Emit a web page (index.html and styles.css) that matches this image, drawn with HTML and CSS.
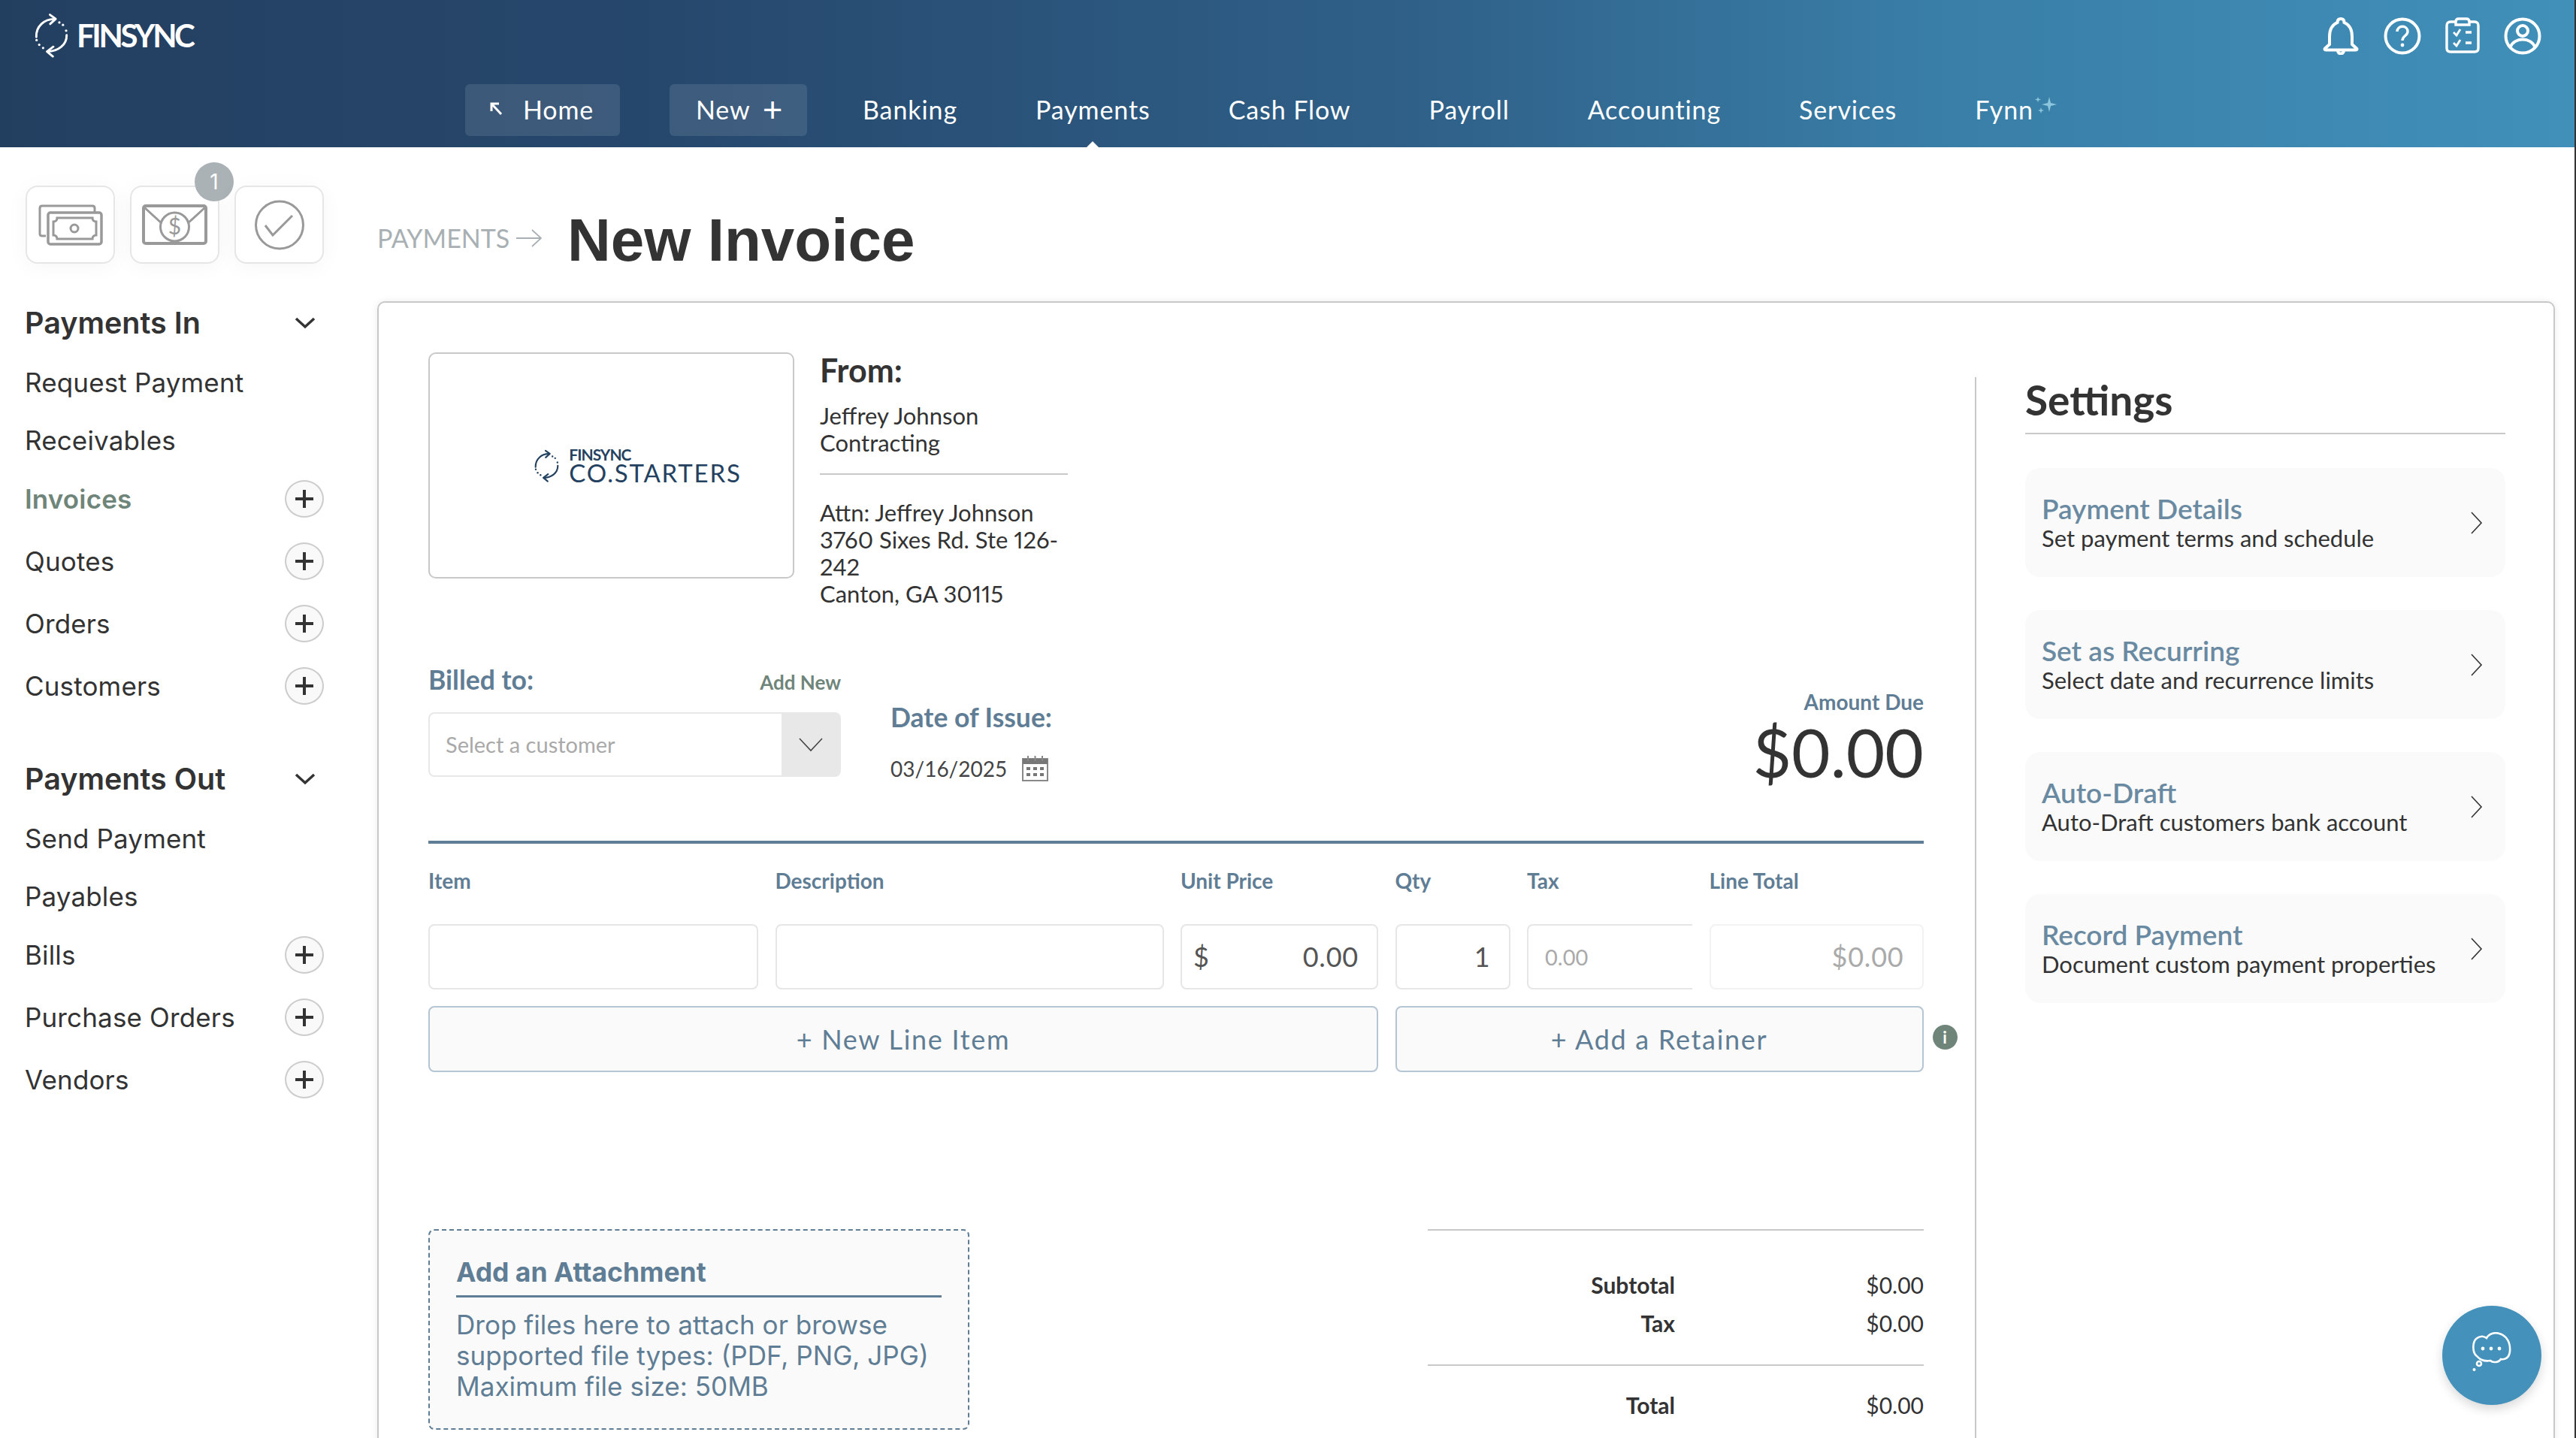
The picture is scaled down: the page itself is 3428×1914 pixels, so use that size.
FILE: index.html
```html
<!DOCTYPE html>
<html lang="en">
<head>
    <meta charset="UTF-8">
    <title>New Invoice</title>
    <link rel="stylesheet" href="styles.css">
</head>
<body>
    <svg class="defs" width="0" height="0">
        <symbol id="sync" viewBox="70 18 145 186">
            <path d="M80 118C78 75 112 42 158 44" fill="none" stroke="currentColor" stroke-width="9" stroke-linecap="round"/>
            <path d="M136 26L160 43L137 64" fill="none" stroke="currentColor" stroke-width="9" stroke-linecap="round" stroke-linejoin="round"/>
            <path d="M205 110C206 150 170 178 126 178" fill="none" stroke="currentColor" stroke-width="9" stroke-linecap="round"/>
            <path d="M150 158L124 178L148 198" fill="none" stroke="currentColor" stroke-width="9" stroke-linecap="round" stroke-linejoin="round"/>
            <circle cx="175" cy="58" r="5" fill="currentColor"/>
            <circle cx="190" cy="68" r="5" fill="currentColor"/>
            <circle cx="203" cy="92" r="5" fill="currentColor"/>
            <circle cx="81" cy="131" r="5" fill="currentColor"/>
            <circle cx="92" cy="150" r="5" fill="currentColor"/>
            <circle cx="108" cy="163" r="5" fill="currentColor"/>
        </symbol>
        <symbol id="plus" viewBox="0 0 26 26">
            <path d="M13 1V25M1 13H25" stroke="#333" stroke-width="4"/>
        </symbol>
        <symbol id="down" viewBox="0 0 28 16">
            <path d="M2 2L14 13L26 2" fill="none" stroke="#333" stroke-width="3.5"/>
        </symbol>
        <symbol id="next" viewBox="0 0 16 30">
            <path d="M1 1L14 15L1 29" fill="none" stroke="#333" stroke-width="1.6"/>
        </symbol>
    </svg>

    <header class="topbar">
        <div class="topbar-row">
            <div class="brand">
                <svg class="brand-icon"><use href="#sync"/></svg>
                <span class="brand-name">FINSYNC</span>
            </div>
            <div class="top-icons">
                <svg width="50" height="50" viewBox="0 0 50 50" fill="none" stroke="#fff" stroke-width="4">
                    <path d="M25 2C22 2 20.500 4 20.500 7C13 10 10 17 10 26V36L4 41.500C3 42.500 3.500 43.500 5 43.500H45C46.500 43.500 47 42.500 46 41.500L40 36V26C40 17 37 10 29.500 7C29.500 4 28 2 25 2Z"/>
                    <path d="M21 44C21 50 29 50 29 44" />
                </svg>
                <svg width="50" height="50" viewBox="0 0 50 50" fill="none" stroke="#fff" stroke-width="4">
                    <circle cx="25" cy="25" r="22.500"/>
                    <path d="M18 19C18 10 32 10 32 19C32 25 25 24 25 31" stroke-width="3.400"/>
                    <circle cx="25" cy="37" r="2.400" fill="#fff" stroke="none"/>
                </svg>
                <svg width="46" height="48" viewBox="0 0 46 48" fill="none" stroke="#fff" stroke-width="3.400">
                    <path d="M14 6H7C3.500 6 2 8 2 11V41C2 44 3.500 46 7 46H39C42.500 46 44 44 44 41V11C44 8 42.500 6 39 6H32"/>
                    <path d="M14 10H32V6C32 3 30 2 28 2H18C16 2 14 3 14 6Z"/>
                    <path d="M11 20L15 24L20 16M11 34L15 38L20 30" stroke-width="2.800"/>
                    <path d="M27 20H35M27 34H35" stroke-width="3.600"/>
                </svg>
                <svg width="50" height="50" viewBox="0 0 50 50" fill="none" stroke="#fff" stroke-width="4">
                    <circle cx="25" cy="25" r="22.500"/>
                    <circle cx="25" cy="18" r="7"/>
                    <path d="M8.500 40C11 33 18 29.500 25 29.500C32 29.500 39 33 41.500 40"/>
                </svg>
            </div>
        </div>
        <nav class="nav">
            <a class="nav-btn nav-home">
                <svg width="20" height="18" viewBox="0 0 20 18" fill="none" stroke="#fff" stroke-width="3">
                    <path d="M3 12V2H13M3 2L16 16"/>
                </svg>
                Home
            </a>
            <a class="nav-btn nav-new">New <span class="nav-plus">+</span></a>
            <a class="nav-link">Banking</a>
            <a class="nav-link is-active">Payments</a>
            <a class="nav-link">Cash Flow</a>
            <a class="nav-link">Payroll</a>
            <a class="nav-link">Accounting</a>
            <a class="nav-link">Services</a>
            <a class="nav-link">Fynn<svg class="sparkle" width="31" height="24" viewBox="0 0 31 24" fill="#8cc6dc">
                <path d="M21 0L23 8L31 10L23 12L21 20L19 12L11 10L19 8Z"/>
                <path d="M6 0L7 2.500L10 3.500L7 4.500L6 7L5 4.500L2 3.500L5 2.500Z"/>
                <path d="M10 14L11 17L14 18L11 19L10 22L9 19L6 18L9 17Z"/>
            </svg></a>
        </nav>
    </header>

    <div class="page">
        <aside class="sidebar">
            <div class="stage-tabs">
                <div class="stage-tab">
                    <svg width="86" height="55" viewBox="0 0 86 55" fill="none" stroke="#999" stroke-width="3">
                        <path d="M10 42H5C3 42 2 41 2 39V5C2 3 3 2 5 2H72C74 2 75 3 75 5V10"/>
                        <rect x="13" y="11" width="71" height="42" rx="3" stroke-width="3.500"/>
                        <path d="M25 18H72C72 21 74 23 77 23V41C74 41 72 43 72 46H25C25 43 23 41 20 41V23C23 23 25 21 25 18Z"/>
                        <circle cx="48" cy="32" r="5"/>
                    </svg>
                </div>
                <div class="stage-tab">
                    <svg width="87" height="54" viewBox="0 0 87 54" fill="none" stroke="#999" stroke-width="4">
                        <rect x="2" y="2" width="83" height="50" rx="3"/>
                        <path d="M3 4L27 26M84 4L60 26" stroke-width="3"/>
                        <circle cx="43.500" cy="30" r="19" fill="#fff" stroke-width="3"/>
                        <text x="43.500" y="40" class="coin">$</text>
                    </svg>
                    <span class="badge">1</span>
                </div>
                <div class="stage-tab">
                    <svg width="66" height="67" viewBox="0 0 66 67" fill="none" stroke="#999" stroke-width="3">
                        <circle cx="33" cy="33.500" r="31.500"/>
                        <path d="M14 34L24 47L50 21"/>
                    </svg>
                </div>
            </div>

            <section class="side-group">
                <h3 class="side-head">Payments In <svg class="side-toggle"><use href="#down"/></svg></h3>
                <a class="side-row">Request Payment</a>
                <a class="side-row">Receivables</a>
                <a class="side-row has-add is-current">Invoices <span class="add"><svg><use href="#plus"/></svg></span></a>
                <a class="side-row has-add">Quotes <span class="add"><svg><use href="#plus"/></svg></span></a>
                <a class="side-row has-add">Orders <span class="add"><svg><use href="#plus"/></svg></span></a>
                <a class="side-row has-add">Customers <span class="add"><svg><use href="#plus"/></svg></span></a>
            </section>

            <section class="side-group side-group-out">
                <h3 class="side-head">Payments Out <svg class="side-toggle"><use href="#down"/></svg></h3>
                <a class="side-row">Send Payment</a>
                <a class="side-row">Payables</a>
                <a class="side-row has-add">Bills <span class="add"><svg><use href="#plus"/></svg></span></a>
                <a class="side-row has-add">Purchase Orders <span class="add"><svg><use href="#plus"/></svg></span></a>
                <a class="side-row has-add">Vendors <span class="add"><svg><use href="#plus"/></svg></span></a>
            </section>
        </aside>

        <main class="content">
            <div class="title-row">
                <span class="crumb">PAYMENTS
                    <svg width="34" height="24" viewBox="0 0 34 24" fill="none" stroke="#a8b0b4" stroke-width="1.800">
                        <path d="M0 12H32M21 1L33 12L21 23"/>
                    </svg>
                </span>
                <h1 class="page-title">New Invoice</h1>
            </div>

            <div class="card">
                <div class="invoice">
                    <div class="from-row">
                        <div class="logo-box">
                            <svg class="logo-icon"><use href="#sync"/></svg>
                            <div class="logo-text">
                                <span class="logo-top">FINSYNC</span>
                                <span class="logo-bottom">CO.STARTERS</span>
                            </div>
                        </div>
                        <div class="from">
                            <h2 class="from-title">From:</h2>
                            <p class="from-name">Jeffrey Johnson<br>Contracting</p>
                            <p class="from-addr">Attn: Jeffrey Johnson<br>3760 Sixes Rd. Ste 126-242<br>Canton, GA 30115</p>
                        </div>
                    </div>

                    <div class="bill-row">
                        <div class="billed">
                            <div class="billed-head">
                                <span class="field-title">Billed to:</span>
                                <a class="add-new">Add New</a>
                            </div>
                            <div class="select">
                                <span class="select-text">Select a customer</span>
                                <span class="select-btn">
                                    <svg width="32" height="20" viewBox="0 0 32 20" fill="none" stroke="#444" stroke-width="1.600"><path d="M1 2L16 18L31 2"/></svg>
                                </span>
                            </div>
                        </div>
                        <div class="issue">
                            <span class="field-title">Date of Issue:</span>
                            <div class="issue-date">03/16/2025
                                <svg width="35" height="34" viewBox="0 0 35 34" fill="#777">
                                    <path d="M1 4H34V33H1Z" fill="none" stroke="#888" stroke-width="2"/>
                                    <path d="M1 4H34V11H1Z"/>
                                    <path d="M8 0V7M17.500 0V7M27 0V7" stroke="#888" stroke-width="2"/>
                                    <rect x="6" y="15" width="5" height="4"/><rect x="15" y="15" width="5" height="4"/><rect x="24" y="15" width="5" height="4"/>
                                    <rect x="6" y="23" width="5" height="4"/><rect x="15" y="23" width="5" height="4"/><rect x="24" y="23" width="5" height="4"/>
                                </svg>
                            </div>
                        </div>
                        <div class="amount">
                            <span class="amount-label">Amount Due</span>
                            <span class="amount-value">$0.00</span>
                        </div>
                    </div>

                    <div class="lines">
                        <span class="col-title">Item</span>
                        <span class="col-title">Description</span>
                        <span class="col-title">Unit Price</span>
                        <span class="col-title">Qty</span>
                        <span class="col-title">Tax</span>
                        <span class="col-title">Line Total</span>

                        <div class="cell"></div>
                        <div class="cell"></div>
                        <div class="cell cell-price"><span>$</span><span>0.00</span></div>
                        <div class="cell cell-qty">1</div>
                        <div class="cell cell-tax">0.00</div>
                        <div class="cell cell-total">$0.00</div>

                        <a class="line-btn line-btn-item">+ New Line Item</a>
                        <a class="line-btn line-btn-retainer">+ Add a Retainer
                            <span class="info">i</span>
                        </a>
                    </div>

                    <div class="bottom-row">
                        <div class="attach">
                            <h4 class="attach-title">Add an Attachment</h4>
                            <p class="attach-text">Drop files here to attach or browse<br>supported file types: (PDF, PNG, JPG)<br>Maximum file size: 50MB</p>
                        </div>
                        <div class="totals">
                            <div class="totals-group">
                                <div class="total-row"><span>Subtotal</span><span>$0.00</span></div>
                                <div class="total-row"><span>Tax</span><span>$0.00</span></div>
                            </div>
                            <div class="totals-group totals-group-last">
                                <div class="total-row"><span>Total</span><span>$0.00</span></div>
                            </div>
                        </div>
                    </div>
                </div>

                <aside class="settings">
                    <h2 class="settings-title">Settings</h2>
                    <a class="setting">
                        <div><div class="setting-name">Payment Details</div><div class="setting-sub">Set payment terms and schedule</div></div>
                        <svg class="setting-next"><use href="#next"/></svg>
                    </a>
                    <a class="setting">
                        <div><div class="setting-name">Set as Recurring</div><div class="setting-sub">Select date and recurrence limits</div></div>
                        <svg class="setting-next"><use href="#next"/></svg>
                    </a>
                    <a class="setting">
                        <div><div class="setting-name">Auto-Draft</div><div class="setting-sub">Auto-Draft customers bank account</div></div>
                        <svg class="setting-next"><use href="#next"/></svg>
                    </a>
                    <a class="setting">
                        <div><div class="setting-name">Record Payment</div><div class="setting-sub">Document custom payment properties</div></div>
                        <svg class="setting-next"><use href="#next"/></svg>
                    </a>
                </aside>
            </div>
        </main>
    </div>

    <div class="chat">
        <svg width="52" height="54" viewBox="0 0 52 54" fill="none" stroke="#fff" stroke-width="2.600">
            <path d="M6 32C0 28 0 14 5 9C10 5 15 5 19 8C22 2 30 0 36 2C46 5 51 14 50 26C49 34 44 37 38 36C35 41 27 41 24 38C18 39 11 38 6 32Z"/>
            <circle cx="9" cy="42" r="3"/>
            <circle cx="2.500" cy="50" r="2" fill="#fff" stroke="none"/>
            <circle cx="14" cy="22" r="2.400" fill="#fff" stroke="none"/>
            <circle cx="25" cy="22" r="2.400" fill="#fff" stroke="none"/>
            <circle cx="36" cy="22" r="2.400" fill="#fff" stroke="none"/>
        </svg>
    </div>
    <div class="edge"></div>
</body>
</html>
```

FILE: styles.css
```css
* {
    box-sizing: border-box;
}

html, body {
    height: 100%;
}

body {
    margin: 0;
    display: flex;
    flex-direction: column;
    overflow: hidden;
    background: #fff;
    color: #333;
    font-family: "Lato", "Open Sans", sans-serif;
}

h1, h2, h3, h4, p {
    margin: 0;
}

.defs {
    position: absolute;
}

/* Top bar */
.topbar {
    height: 196px;
    flex: none;
    display: flex;
    flex-direction: column;
    background: linear-gradient(90deg, #233f60 0%, #26476c 25%, #2f6088 55%, #397ea7 75%, #4090ba 100%);
    color: #fff;
}

.topbar-row {
    height: 112px;
    display: flex;
    justify-content: space-between;
    padding: 17px 45px 0 45px;
}

.brand {
    display: flex;
    align-items: flex-start;
    gap: 10px;
}

.brand-icon {
    width: 47px;
    height: 60px;
}

.brand-name {
    margin-top: 5px;
    font-size: 42px;
    font-weight: 700;
    letter-spacing: -3.400px;
    line-height: 50px;
}

.top-icons {
    display: flex;
    gap: 32px;
    padding-top: 6px;
    margin-right: 1px;
}

.nav {
    display: flex;
    align-items: center;
    height: 69px;
    padding-left: 619px;
    padding-bottom: 3px;
    font-size: 34px;
    letter-spacing: 0.900px;
}

.nav-btn {
    height: 69px;
    margin-top: 3px;
    display: flex;
    align-items: center;
    padding-bottom: 3px;
    border-radius: 6px;
    background: rgba(255, 255, 255, 0.11);
}

.nav-home {
    width: 206px;
    padding-left: 32px;
    gap: 25px;
    margin-right: 66px;
}

.nav-new {
    width: 183px;
    padding-left: 35px;
    gap: 16px;
    margin-right: 74px;
}

.nav-plus {
    font-size: 46px;
    font-weight: 400;
    line-height: 40px;
}

.nav-link {
    position: relative;
    display: flex;
    align-items: center;
    margin-right: 104px;
}

.nav-link.is-active::after {
    content: "";
    position: absolute;
    left: 50%;
    bottom: -35px;
    margin-left: -13px;
    border: 13px solid transparent;
    border-top: 0;
    border-bottom-color: #fff;
}

.sparkle {
    margin-top: -8px;
}

/* Sidebar */
.page {
    flex: 1;
    display: flex;
    min-height: 0;
}

.sidebar {
    width: 502px;
    flex: none;
    padding: 51px 71px 0 33px;
    font-family: "Inter", sans-serif;
}

.stage-tabs {
    display: flex;
    gap: 20px;
    margin: 0 0 51px 1px;
}

.stage-tab {
    position: relative;
    width: 119px;
    height: 104px;
    flex: none;
    display: flex;
    align-items: center;
    justify-content: center;
    border: 2px solid #e6e6e6;
    border-radius: 16px;
    background: #fff;
    box-shadow: 0 4px 30px rgba(0, 0, 0, 0.04);
}

.coin {
    fill: #999;
    stroke: none;
    font-family: "Lato", sans-serif;
    font-size: 30px;
    text-anchor: middle;
}

.badge {
    position: absolute;
    top: -33px;
    right: -21px;
    width: 52px;
    height: 52px;
    display: flex;
    align-items: center;
    justify-content: center;
    border-radius: 50%;
    background: #abb2b5;
    color: #fff;
    font-size: 28px;
}

.side-group-out {
    margin-top: 55px;
}

.side-head {
    height: 56px;
    margin: 0 0 12px 0;
    display: flex;
    align-items: center;
    justify-content: space-between;
    padding-right: 11px;
    font-size: 39.500px;
    font-weight: 600;
}

.side-toggle {
    width: 28px;
    height: 16px;
}

.side-row {
    height: 77px;
    display: flex;
    align-items: center;
    justify-content: space-between;
    font-size: 35px;
    letter-spacing: 0.150px;
}

.side-row.has-add {
    height: 83px;
    margin-top: -2px;
    margin-bottom: 2px;
}

.side-row.is-current {
    color: #6f857a;
    font-weight: 600;
}

.add {
    width: 52px;
    height: 50px;
    display: flex;
    align-items: center;
    justify-content: center;
    border: 2px solid #ccc;
    border-radius: 50%;
    background: #f9f9f9;
}

.add svg {
    width: 26px;
    height: 26px;
}

/* Main column */
.content {
    flex: 1;
    min-width: 0;
}

.title-row {
    height: 205px;
    display: flex;
    align-items: center;
    padding-top: 34px;
}

.crumb {
    width: 253px;
    display: flex;
    align-items: center;
    gap: 9px;
    margin-top: 2px;
    font-size: 34px;
    color: #a8b0b4;
}

.page-title {
    margin-top: 8px;
    font-family: "Liberation Sans", Arial, sans-serif;
    font-size: 80px;
    font-weight: 700;
    line-height: 90px;
}

.card {
    width: 2898px;
    height: 1700px;
    display: flex;
    padding: 66px 0 0 66px;
    border: 2px solid #c8c8c8;
    border-radius: 10px;
    box-shadow: 0 0 10px rgba(0, 0, 0, 0.08);
}

.invoice {
    width: 1990px;
    flex: none;
}

.from-row {
    display: flex;
    gap: 34px;
}

.logo-box {
    width: 487px;
    height: 301px;
    display: flex;
    align-items: center;
    justify-content: center;
    gap: 12px;
    padding-left: 70px;
    border: 2px solid #c8c8c8;
    border-radius: 10px;
    color: #24425f;
}

.logo-icon {
    width: 35px;
    height: 44px;
    flex: none;
}

.logo-text {
    display: flex;
    flex-direction: column;
}

.logo-top {
    font-size: 21px;
    font-weight: 700;
    letter-spacing: -1px;
    line-height: 18px;
}

.logo-bottom {
    font-size: 33px;
    letter-spacing: 1.800px;
    line-height: 30px;
}

.from {
    width: 330px;
    font-size: 31px;
    line-height: 36.300px;
}

.from-title {
    font-size: 43px;
    font-weight: 700;
    line-height: 48px;
    margin-bottom: 18px;
}

.from-name {
    padding-bottom: 22px;
    border-bottom: 2px solid #c8c8c8;
    margin-bottom: 32px;
}

.from-addr {
    font-variant-numeric: proportional-nums;
}

.bill-row {
    display: flex;
    margin-top: 74px;
}

.billed {
    width: 549px;
    flex: none;
}

.billed-head {
    display: flex;
    justify-content: space-between;
    align-items: baseline;
    height: 42px;
    margin-bottom: 23px;
}

.field-title {
    font-size: 35.500px;
    font-weight: 700;
    color: #5f7d94;
}

.add-new {
    font-size: 26px;
    font-weight: 700;
    color: #6f857a;
}

.select {
    height: 86px;
    display: flex;
    justify-content: space-between;
    border: 2px solid #e8e8e8;
    border-radius: 8px;
}

.select-text {
    align-self: center;
    padding-left: 21px;
    font-size: 29px;
    color: #a9a9a9;
}

.select-btn {
    width: 77px;
    display: flex;
    align-items: center;
    justify-content: center;
    background: #e8e8e8;
}

.issue {
    margin: 50px 0 0 66px;
}

.issue-date {
    display: flex;
    align-items: flex-end;
    gap: 20px;
    margin-top: 30px;
    font-size: 28px;
    color: #444;
}

.amount {
    flex: 1;
    display: flex;
    flex-direction: column;
    align-items: flex-end;
    margin-top: 34px;
}

.amount-label {
    font-size: 28px;
    font-weight: 700;
    color: #5f7d94;
}

.amount-value {
    font-size: 89px;
    line-height: 100px;
    color: #333;
}

.lines {
    display: grid;
    grid-template-columns: 439px 517px 263px 153px 220px 285px;
    column-gap: 22.500px;
    margin-top: 68px;
    padding-top: 32px;
    border-top: 4px solid #5f7d94;
}

.col-title {
    height: 75px;
    font-size: 28px;
    font-weight: 700;
    color: #5f7d94;
}

.cell {
    height: 87px;
    display: flex;
    align-items: center;
    padding: 0 24px;
    border: 2px solid #e6e6e6;
    border-radius: 8px;
    font-size: 36px;
    letter-spacing: 0.800px;
    color: #555;
}

.cell-price {
    justify-content: space-between;
    padding-left: 15px;
}

.cell-qty {
    justify-content: flex-end;
}

.cell-tax {
    padding-left: 22px;
    border-right: 0;
    border-top-right-radius: 0;
    border-bottom-right-radius: 0;
    font-size: 29px;
    letter-spacing: 0;
    color: #aaa;
}

.cell-total {
    justify-content: flex-end;
    border-color: #f2f2f2;
    color: #aaa;
}

.line-btn {
    position: relative;
    height: 88px;
    margin-top: 22px;
    display: flex;
    align-items: center;
    justify-content: center;
    border: 2px solid #b5c5d3;
    border-radius: 8px;
    background: #fafafa;
    font-size: 36px;
    letter-spacing: 1.700px;
    color: #5f7d94;
}

.info {
    position: absolute;
    right: -47px;
    top: 23px;
    width: 33px;
    height: 33px;
    display: flex;
    align-items: center;
    justify-content: center;
    border-radius: 50%;
    background: #6f857a;
    color: #fff;
    font-size: 22px;
    font-weight: 700;
    letter-spacing: 0;
}

.line-btn-item {
    grid-column: 1 / 4;
}

.line-btn-retainer {
    grid-column: 4 / 7;
}

.bottom-row {
    display: flex;
    justify-content: space-between;
    margin-top: 209px;
}

.attach {
    width: 720px;
    height: 267px;
    padding: 32px 35px 0;
    border: 2px dashed #5f7d94;
    border-radius: 8px;
    background: #fafafa;
    font-family: "Inter", sans-serif;
    color: #5f7d94;
}

.attach-title {
    padding-bottom: 6px;
    border-bottom: 3px solid #5f7d94;
    font-size: 35.500px;
    font-weight: 700;
    line-height: 48px;
}

.attach-text {
    margin-top: 16px;
    font-size: 35.100px;
    line-height: 41px;
    white-space: nowrap;
}

.totals {
    width: 660px;
    font-size: 30px;
}

.totals-group {
    height: 180px;
    padding-top: 54px;
    border-top: 2px solid #c8c8c8;
}

.totals-group-last {
    padding-top: 34px;
}

.total-row {
    display: flex;
    justify-content: flex-end;
    height: 51px;
}

.total-row span:first-child {
    font-weight: 700;
}

.total-row span:last-child {
    width: 331px;
    text-align: right;
}

/* Settings column */
.settings {
    width: 706px;
    flex: none;
    margin: 33px 0 0 68px;
    padding-left: 65px;
    border-left: 2px solid #c8c8c8;
}

.settings-title {
    height: 76px;
    margin-bottom: 45px;
    border-bottom: 2px solid #c8c8c8;
    font-size: 55px;
    font-weight: 700;
    line-height: 60px;
}

.setting {
    height: 145px;
    margin-bottom: 44px;
    display: flex;
    align-items: center;
    justify-content: space-between;
    padding: 0 30px 0 22px;
    border-radius: 20px;
    background: #fafafa;
}

.setting-name {
    font-size: 37px;
    font-weight: 600;
    line-height: 40px;
    color: #6a8aa2;
}

.setting-sub {
    font-size: 31px;
    line-height: 38px;
}

.setting-next {
    width: 16px;
    height: 30px;
}

/* Chat button */
.chat {
    position: absolute;
    left: 3250px;
    top: 1738px;
    width: 132px;
    height: 132px;
    display: flex;
    align-items: center;
    justify-content: center;
    padding-bottom: 8px;
    border-radius: 50%;
    background: #4491bb;
    box-shadow: 0 6px 14px rgba(0, 0, 0, 0.15);
}

.edge {
    position: absolute;
    top: 0;
    right: 0;
    bottom: 0;
    width: 2px;
    background: #333;
}
```
